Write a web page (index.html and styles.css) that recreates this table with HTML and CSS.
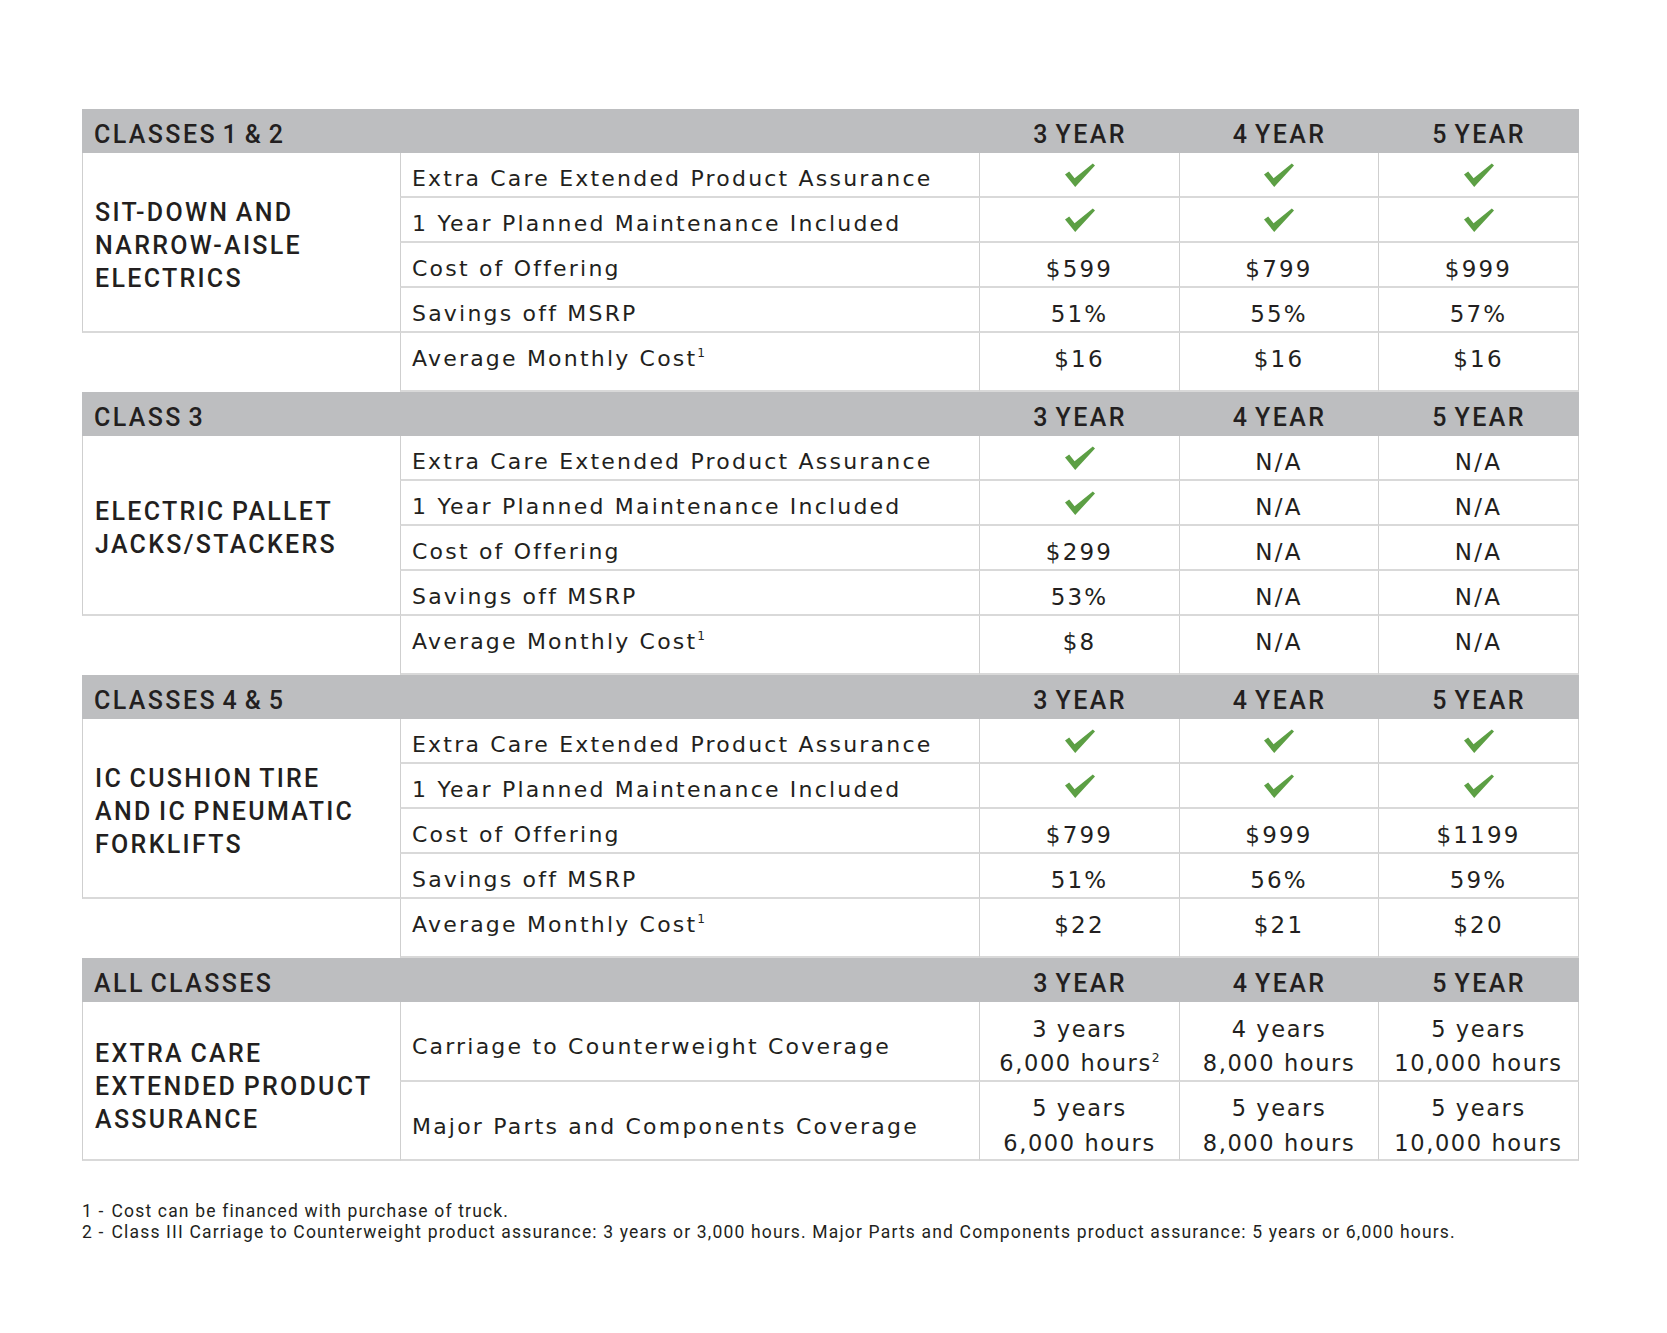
FILE: index.html
```html
<!DOCTYPE html>
<html lang="en">
<head>
<meta charset="utf-8">
<title>Extra Care Extended Product Assurance</title>
<link rel="stylesheet" href="styles.css">
</head>
<body>
<svg width="0" height="0" class="defs">
  <defs>
    <symbol id="chk" viewBox="0 0 30 24">
      <path d="M0 11.6 L4.2 8.4 L9.6 15.2 L27.8 0.4 L30 2.6 L10.2 24 Z"/>
    </symbol>
  </defs>
</svg>
<div class="page">
  <div class="table">
    <section class="sec">
      <div class="hd hd-title">CLASSES 1 &amp; 2</div>
      <div class="hd hd-year">3 YEAR</div>
      <div class="hd hd-year">4 YEAR</div>
      <div class="hd hd-year">5 YEAR</div>
      <div class="cat">SIT-DOWN AND<br>NARROW-AISLE<br>ELECTRICS</div>
      <div class="lbl">Extra Care Extended Product Assurance</div>
      <div class="val ck"><svg class="check"><use href="#chk"/></svg></div>
      <div class="val ck"><svg class="check"><use href="#chk"/></svg></div>
      <div class="val ck"><svg class="check"><use href="#chk"/></svg></div>
      <div class="lbl">1 Year Planned Maintenance Included</div>
      <div class="val ck"><svg class="check"><use href="#chk"/></svg></div>
      <div class="val ck"><svg class="check"><use href="#chk"/></svg></div>
      <div class="val ck"><svg class="check"><use href="#chk"/></svg></div>
      <div class="lbl">Cost of Offering</div>
      <div class="val">$599</div>
      <div class="val">$799</div>
      <div class="val">$999</div>
      <div class="lbl">Savings off MSRP</div>
      <div class="val">51%</div>
      <div class="val">55%</div>
      <div class="val">57%</div>
      <div class="blank"></div>
      <div class="lbl">Average Monthly Cost<sup>1</sup></div>
      <div class="val">$16</div>
      <div class="val">$16</div>
      <div class="val">$16</div>
    </section>

    <section class="sec">
      <div class="hd hd-title">CLASS 3</div>
      <div class="hd hd-year">3 YEAR</div>
      <div class="hd hd-year">4 YEAR</div>
      <div class="hd hd-year">5 YEAR</div>
      <div class="cat">ELECTRIC PALLET<br>JACKS/STACKERS</div>
      <div class="lbl">Extra Care Extended Product Assurance</div>
      <div class="val ck"><svg class="check"><use href="#chk"/></svg></div>
      <div class="val">N/A</div>
      <div class="val">N/A</div>
      <div class="lbl">1 Year Planned Maintenance Included</div>
      <div class="val ck"><svg class="check"><use href="#chk"/></svg></div>
      <div class="val">N/A</div>
      <div class="val">N/A</div>
      <div class="lbl">Cost of Offering</div>
      <div class="val">$299</div>
      <div class="val">N/A</div>
      <div class="val">N/A</div>
      <div class="lbl">Savings off MSRP</div>
      <div class="val">53%</div>
      <div class="val">N/A</div>
      <div class="val">N/A</div>
      <div class="blank"></div>
      <div class="lbl">Average Monthly Cost<sup>1</sup></div>
      <div class="val">$8</div>
      <div class="val">N/A</div>
      <div class="val">N/A</div>
    </section>

    <section class="sec">
      <div class="hd hd-title">CLASSES 4 &amp; 5</div>
      <div class="hd hd-year">3 YEAR</div>
      <div class="hd hd-year">4 YEAR</div>
      <div class="hd hd-year">5 YEAR</div>
      <div class="cat">IC CUSHION TIRE<br>AND IC PNEUMATIC<br>FORKLIFTS</div>
      <div class="lbl">Extra Care Extended Product Assurance</div>
      <div class="val ck"><svg class="check"><use href="#chk"/></svg></div>
      <div class="val ck"><svg class="check"><use href="#chk"/></svg></div>
      <div class="val ck"><svg class="check"><use href="#chk"/></svg></div>
      <div class="lbl">1 Year Planned Maintenance Included</div>
      <div class="val ck"><svg class="check"><use href="#chk"/></svg></div>
      <div class="val ck"><svg class="check"><use href="#chk"/></svg></div>
      <div class="val ck"><svg class="check"><use href="#chk"/></svg></div>
      <div class="lbl">Cost of Offering</div>
      <div class="val">$799</div>
      <div class="val">$999</div>
      <div class="val">$1199</div>
      <div class="lbl">Savings off MSRP</div>
      <div class="val">51%</div>
      <div class="val">56%</div>
      <div class="val">59%</div>
      <div class="blank"></div>
      <div class="lbl">Average Monthly Cost<sup>1</sup></div>
      <div class="val">$22</div>
      <div class="val">$21</div>
      <div class="val">$20</div>
    </section>

    <section class="sec sec-all">
      <div class="hd hd-title">ALL CLASSES</div>
      <div class="hd hd-year">3 YEAR</div>
      <div class="hd hd-year">4 YEAR</div>
      <div class="hd hd-year">5 YEAR</div>
      <div class="cat cat-all">EXTRA CARE<br>EXTENDED PRODUCT<br>ASSURANCE</div>
      <div class="lbl lbl-mid">Carriage to Counterweight Coverage</div>
      <div class="val two"><span class="ln">3 years</span><span class="ln">6,000 hours<sup>2</sup></span></div>
      <div class="val two"><span class="ln">4 years</span><span class="ln">8,000 hours</span></div>
      <div class="val two"><span class="ln">5 years</span><span class="ln">10,000 hours</span></div>
      <div class="lbl lbl-mid">Major Parts and Components Coverage</div>
      <div class="val two"><span class="ln">5 years</span><span class="ln">6,000 hours</span></div>
      <div class="val two"><span class="ln">5 years</span><span class="ln">8,000 hours</span></div>
      <div class="val two"><span class="ln">5 years</span><span class="ln">10,000 hours</span></div>
    </section>
  </div>

  <div class="notes">
    <p><span class="fn">1 -</span>Cost can be financed with purchase of truck.</p>
    <p><span class="fn">2 -</span>Class III Carriage to Counterweight product assurance: 3 years or 3,000 hours. Major Parts and Components product assurance: 5 years or 6,000 hours.</p>
  </div>
</div>
</body>
</html>
```

FILE: styles.css
```css
* { box-sizing: border-box; }

html, body {
  margin: 0;
  padding: 0;
  background: #ffffff;
}

body {
  font-family: Roboto, "Liberation Sans", sans-serif;
  color: #231f20;
}

.defs {
  position: absolute;
  width: 0;
  height: 0;
  overflow: hidden;
}

.page {
  padding: 109px 0 0 82px;
}

.table {
  width: 1497px;
}

.sec {
  display: grid;
  grid-template-columns: 318px 580px 200px 199px 200px;
  grid-template-rows: 44px 45px 45px 45px 45px 59px;
}

.sec-all {
  grid-template-rows: 44px 80px 79px;
}

.hd {
  background: #bdbec0;
  font-weight: 500;
  font-size: 25px;
  line-height: 30px;
  letter-spacing: 2.4px;
  word-spacing: -3px;
  padding-top: 11px;
}

.hd-title {
  grid-column: span 2;
  padding-left: 12px;
}

.hd-year {
  text-align: center;
}

.cat {
  grid-row: span 4;
  border-left: 1px solid #cfcfcf;
  border-bottom: 2px solid #d9d9d9;
  display: flex;
  align-items: center;
  padding: 6px 0 0 12px;
  font-weight: 500;
  font-size: 25px;
  line-height: 33px;
  letter-spacing: 2.3px;
  word-spacing: -2px;
}

.cat-all {
  grid-row: span 2;
  padding-top: 12px;
}

.blank {
  background: transparent;
}

.lbl {
  border-left: 1px solid #cfcfcf;
  border-right: 1px solid #cfcfcf;
  border-bottom: 2px solid #d9d9d9;
  padding: 12px 0 0 11px;
  font-family: "DejaVu Sans", Roboto, sans-serif;
  font-size: 22px;
  line-height: 28px;
  letter-spacing: 2.2px;
  white-space: nowrap;
}

.lbl-mid {
  display: flex;
  align-items: center;
  padding-top: 12px;
}

.val {
  border-right: 1px solid #cfcfcf;
  border-bottom: 2px solid #d9d9d9;
  padding-top: 12px;
  text-align: center;
  font-family: "DejaVu Sans", Roboto, sans-serif;
  font-size: 23px;
  line-height: 28px;
  letter-spacing: 2.2px;
}

.val.ck {
  padding-top: 0;
  display: flex;
  align-items: center;
  justify-content: center;
}

.val.two {
  padding-top: 10px;
  display: flex;
  flex-direction: column;
  justify-content: center;
  font-size: 22.5px;
  line-height: 34.5px;
  letter-spacing: 1.6px;
}

.ln {
  display: block;
  white-space: nowrap;
}

.check {
  width: 30px;
  height: 24px;
  fill: #5c9f44;
  margin-top: 1px;
}

sup {
  font-size: 0.55em;
  line-height: 0;
  vertical-align: 0.75em;
  letter-spacing: 0;
}

.notes {
  margin-top: 40px;
  font-size: 17.5px;
  line-height: 21px;
  letter-spacing: 1.17px;
}

.notes p {
  margin: 0;
}

.fn {
  margin-right: 7px;
}
```
